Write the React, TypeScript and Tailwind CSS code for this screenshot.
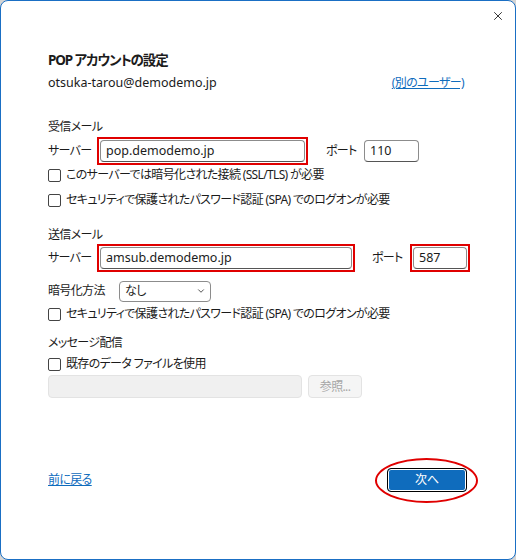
import { X, ChevronDown } from "lucide-react";

const font = "font-['Noto_Sans','Noto_Sans_CJK_JP',sans-serif] [font-feature-settings:'palt'] whitespace-nowrap";
const jp = "tracking-[-0.65px]";

function Check({ label }: { label: string }) {
  return (
    <label className={`flex items-center gap-[5px] h-[18px] text-[12px] text-[#1b1b1b] ${jp}`}>
      <span className="w-[13px] h-[13px] rounded-[2px] border border-[#444] bg-white shrink-0" />
      <span>{label}</span>
    </label>
  );
}

function Field({ value, width }: { value: string; width: string }) {
  return (
    <div
      className={`${width} h-[22px] rounded-[4px] border border-[#8c8c8c] border-b-[#555] bg-white flex items-center px-[5px] text-[12.5px] text-[#1b1b1b]`}
    >
      {value}
    </div>
  );
}

export default function App() {
  return (
    <div className={`w-[516px] h-[560px] bg-[#d4d4d4] ${font}`}>
      <div className="w-[516px] h-[560px] bg-white border border-[#1a6fc4] rounded-[8px] flex flex-col">
        {/* title bar */}
        <div className="flex justify-end h-[30px] pr-[10px] pt-[8px]">
          <X className="w-[14px] h-[14px] text-[#1b1b1b]" strokeWidth={1.5} />
        </div>

        <div className="flex flex-col pl-[47px] pr-[51px] flex-1">
          {/* header */}
          <div className="mt-[18px] h-[22px] flex items-center text-[13.5px] font-bold text-[#1b1b1b] tracking-[-1.1px]">
            POP アカウントの設定
          </div>
          <div className="mt-[2px] h-[20px] flex items-center justify-between text-[12.5px] text-[#1b1b1b]">
            <span>otsuka-tarou@demodemo.jp</span>
            <a className={`text-[12px] text-[#0f6cbd] underline ${jp}`}>(別のユーザー)</a>
          </div>

          {/* incoming */}
          <div className={`mt-[25px] h-[18px] flex items-center text-[12px] text-[#1b1b1b] ${jp}`}>受信メール</div>
          <div className={`mt-[1px] h-[28px] flex items-center text-[12px] text-[#1b1b1b] ${jp}`}>
            <span className="w-[49px] shrink-0">サーバー</span>
            <div className="border-2 border-[#e00000] p-px shrink-0 tracking-normal">
              <Field value="pop.demodemo.jp" width="w-[205px]" />
            </div>
            <span className="ml-[18px] w-[38px] shrink-0">ポート</span>
            <div className="tracking-normal">
              <Field value="110" width="w-[55px]" />
            </div>
          </div>
          <div className="mt-[1px] flex flex-col gap-[7px]">
            <Check label="このサーバーでは暗号化された接続 (SSL/TLS) が必要" />
            <Check label="セキュリティで保護されたパスワード認証 (SPA) でのログオンが必要" />
          </div>

          {/* outgoing */}
          <div className={`mt-[17px] h-[18px] flex items-center text-[12px] text-[#1b1b1b] ${jp}`}>送信メール</div>
          <div className={`h-[28px] flex items-center text-[12px] text-[#1b1b1b] ${jp}`}>
            <span className="w-[49px] shrink-0">サーバー</span>
            <div className="border-2 border-[#e00000] p-px shrink-0 tracking-normal">
              <Field value="amsub.demodemo.jp" width="w-[252px]" />
            </div>
            <span className="ml-[17px] w-[38px] shrink-0">ポート</span>
            <div className="border-2 border-[#e00000] p-px shrink-0 tracking-normal">
              <Field value="587" width="w-[54px]" />
            </div>
          </div>
          <div className={`mt-[9px] h-[20px] flex items-center text-[12px] text-[#1b1b1b] ${jp}`}>
            <span className="w-[71px] shrink-0">暗号化方法</span>
            <div className="w-[92px] h-[21px] rounded-[4px] border border-[#8c8c8c] flex items-center justify-between pl-[5px] pr-[4px]">
              <span>なし</span>
              <ChevronDown className="w-[10px] h-[10px] text-[#333]" strokeWidth={2} />
            </div>
          </div>
          <div className="mt-[4px]">
            <Check label="セキュリティで保護されたパスワード認証 (SPA) でのログオンが必要" />
          </div>

          {/* delivery */}
          <div className={`mt-[11px] h-[18px] flex items-center text-[12px] text-[#1b1b1b] ${jp}`}>メッセージ配信</div>
          <div className="mt-[3px]">
            <Check label="既存のデータ ファイルを使用" />
          </div>
          <div className="mt-[2px] flex items-center gap-[6px]">
            <div className="w-[254px] h-[23px] rounded-[4px] border border-[#e3e3e3] bg-[#f0f0f0]" />
            <div className={`w-[54px] h-[23px] rounded-[4px] border border-[#e3e3e3] bg-[#f5f5f5] flex items-center justify-center text-[12px] text-[#a6a6a6] ${jp}`}>
              参照...
            </div>
          </div>

          {/* footer */}
          <div className="mt-auto mb-[67px] flex items-center justify-between">
            <a className={`text-[12px] text-[#0f6cbd] underline ${jp}`}>前に戻る</a>
            <div className="relative mr-[-3px]">
              <div className="absolute left-[-12px] top-[-10px] w-[103px] h-[45px] rounded-[50%] border-2 border-[#e00000]" />
              <button className="w-[80px] h-[24px] rounded-[4px] border border-black bg-[#0f6cbd] ring-1 ring-inset ring-white text-[12px] text-white flex items-center justify-center">
                次へ
              </button>
            </div>
          </div>
        </div>
      </div>
    </div>
  );
}
